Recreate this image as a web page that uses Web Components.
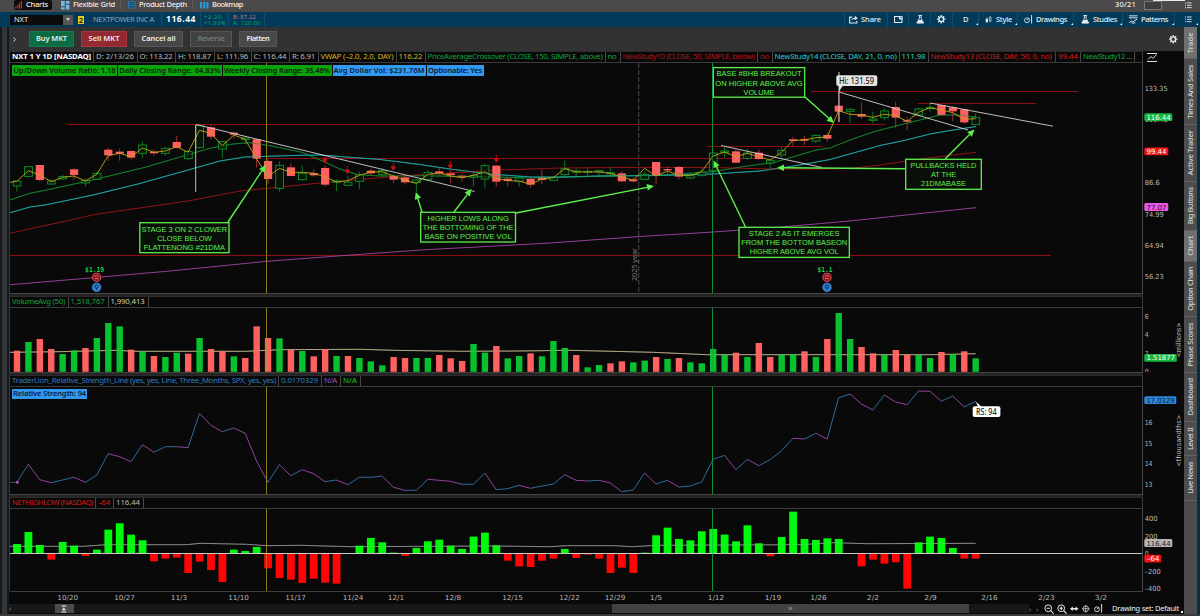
<!DOCTYPE html>
<html lang="en">
<head>
<meta charset="utf-8">
<title>NXT Charts</title>
<style>
    html, body { margin: 0; height: 100%; overflow: hidden; background: #0a0a0a; }
    body { font-family: "Noto Sans", "Open Sans", sans-serif; font-size: 7.5px; color: #ddd; }
</style>
</head>
<body>
<trading-desk></trading-desk>

<script>
// text stretched or squeezed to a given width through its letter spacing
class FitText extends HTMLElement {
    constructor() {
        super()
        this.attachShadow({ mode: 'open' })
        this.shadowRoot.innerHTML = `
            <style>
                :host { display: inline-block; white-space: nowrap; line-height: 1; }
            </style>
            <slot></slot>
        `
    }

    connectedCallback() {
        const width = Number(this.getAttribute('w'))
        const range = document.createRange()
        range.selectNodeContents(this)
        const natural = range.getBoundingClientRect().width
        const count = this.textContent.length
        if (width && natural) this.style.letterSpacing = ((width - natural) / count).toFixed(3) + 'px'
    }
}
customElements.define('fit-text', FitText)

const ICONS = {
    bars: '<path d="M0 6h1.3v2H0zM2 4.500h1.300V8H2zM4 2.500h1.300V8H4zM6 0h1.500v8H6z" fill="#d62b20"/>',
    grid: '<path d="M0 0h3.500v5H0zM4.500 0H8v2.500H4.500zM0 6h3.500v2H0zM4.500 3.500H8V8H4.500z" fill="#6fb7e4"/>',
    depth: '<path d="M.5.5h7v7h-7z" fill="#174c68" stroke="#2f7ba5"/><path d="M1 3h6M1 5h6" stroke="#3e8bb5" stroke-width=".7"/>',
    book: '<path d="M0 1h2v6H0zM3 1h2v6H3zM6 1h2v6H6z" fill="#1f9be0"/>',
    share: '<path d="M3 2H.6v5.500h6.800V5.500" fill="none" stroke="#e6edf2"/><path d="M2.300 5.500c.2-2 1.300-3 3.200-3V.8L8.300 3 5.500 5V3.800c-1.500 0-2.500.5-3.200 1.700z" fill="#e6edf2"/>',
    calendar: '<path d="M.5 1.500h5v1.500h2v4h-7z" fill="none" stroke="#e6edf2"/><circle cx="6.400" cy="2.700" r="1.900" fill="#e6edf2"/><path d="M6.400 1.500v1.400h1" stroke="#033a59" stroke-width=".6" fill="none"/>',
    flask: '<path d="M2.300.5h3.400M3.200.5v2.800L.8 7.500h6.400L4.800 3.300V.5" fill="none" stroke="#e6edf2" stroke-width=".9"/><path d="M2.500 4.700h3L7.200 7.700H.8z" fill="#e6edf2"/>',
    gear: '<circle cx="4" cy="4" r="2.200" fill="none" stroke="#e6edf2" stroke-width="1.300"/><path d="M4 0v1.500M4 6.500V8M0 4h1.500M6.500 4H8M1.200 1.200l1 1M5.800 5.800l1 1M6.800 1.200l-1 1M2.200 5.800l-1 1" stroke="#e6edf2" stroke-width="1.200"/>',
    candles: '<path d="M2 1.500v6M5.500 0v7" stroke="#e6edf2" stroke-width=".7"/><path d="M.8 3h2.400v3.500H.8z" fill="#e6edf2"/><path d="M4.500 1.500h2v3.500h-2z" fill="#033a59" stroke="#e6edf2" stroke-width=".7"/>',
    draw: '<circle cx="2.800" cy="5" r="2.300" fill="none" stroke="#e6edf2" stroke-width=".8"/><path d="M2.800 5l1.800-1.800M7.200 0v8" stroke="#e6edf2" stroke-width=".9"/>',
    pattern: '<path d="M0 .8h8M0 2.700h8M.5 7.500l1.500-2 1.500 1L7.500 4M2.500 7.500H6" fill="none" stroke="#e6edf2" stroke-width=".9"/>',
    list: '<path d="M0 1h1.200M2.200 1H7M0 3.500h1.200M2.200 3.500H7M0 6h1.200M2.200 6H7" stroke="#dfe6ea" stroke-width="1"/>',
    minus: '<circle cx="4" cy="4" r="3.200" fill="none" stroke="#eee" stroke-width=".9"/><path d="M6.300 6.300L9 9M2.400 4h3.200" stroke="#eee"/>',
    plus: '<circle cx="4" cy="4" r="3.200" fill="none" stroke="#eee" stroke-width=".9"/><path d="M6.300 6.300L9 9M2.400 4h3.200M4 2.400v3.200" stroke="#eee"/>',
    span: '<path d="M0 4l3-2.500v1.700h3V1.500L9 4 6 6.500V4.800H3v1.700z" fill="#eee"/>',
    target: '<circle cx="4" cy="4" r="3" fill="none" stroke="#ddd" stroke-width=".8"/><path d="M4 0v8M0 4h8" stroke="#ddd" stroke-width=".8"/>',
    dock: '<path d="M.5 1h5M.5 7.500h5" stroke="#eee" stroke-width="1.100"/><path d="M3 2.500L5 5.500H1z" fill="#eee"/>'
}

class UiIcon extends HTMLElement {
    constructor() {
        super()
        this.attachShadow({ mode: 'open' })
    }

    connectedCallback() {
        const size = this.getAttribute('size') || 9
        this.shadowRoot.innerHTML = `
            <style>
                :host { display: inline-block; line-height: 0; }
                svg { display: block; overflow: visible; }
            </style>
            <svg width="${size}" height="${size}" viewBox="0 0 8.5 8.5">${ICONS[this.getAttribute('name')]}</svg>
        `
    }
}
customElements.define('ui-icon', UiIcon)

class GadgetTabs extends HTMLElement {
    constructor() {
        super()
        this.attachShadow({ mode: 'open' })
        this.shadowRoot.innerHTML = `
            <style>
                :host { display: flex; height: 12px; background: #4b4949; color: #eee; font-weight: 500; overflow: hidden; }
                .tab { box-sizing: border-box; display: flex; align-items: center; height: 10px; border-right: 1px solid #5a5858; }
                .tab ui-icon { margin-right: 3px; }
                .active { background: #0d0d0d; border: 0; border-radius: 2px; margin: 0 3px 0 14px; width: 38px; padding-left: 1px; }
                .spacer { flex: 1; }
                .box { width: 16px; height: 7px; border: 1px solid #777; background: #3d3d3d; margin: 1px 0 0 8px; }
                .strip { width: 32px; height: 1px; background: #e8e8e8; margin: 0 -23px 0 -9px; }
                ui-icon { flex: none; }
            </style>
            <div class="tab active"><ui-icon name="bars" size="8"></ui-icon><fit-text w="22">Charts</fit-text></div>
            <div class="tab" style="width:66px;padding-left:6px"><ui-icon name="grid" size="9"></ui-icon><fit-text w="42">Flexible Grid</fit-text></div>
            <div class="tab" style="width:72px;padding-left:7px"><ui-icon name="depth" size="8"></ui-icon><fit-text w="48">Product Depth</fit-text></div>
            <div class="tab" style="width:58px;padding-left:7px;border:0"><ui-icon name="book" size="9"></ui-icon><fit-text w="31">Bookmap</fit-text></div>
            <div class="spacer"></div>
            <div class="tab" style="border:0"><fit-text w="21">30/21</fit-text></div>
            <div class="box"></div>
            <div class="strip"></div>
            <ui-icon name="list" size="8" style="margin:2px 7px 0 23px"></ui-icon>
        `
    }
}
customElements.define('gadget-tabs', GadgetTabs)

class SymbolBar extends HTMLElement {
    constructor() {
        super()
        this.attachShadow({ mode: 'open' })
        this.shadowRoot.innerHTML = `
            <style>
                :host { display: flex; align-items: center; height: 15px; background: #033a59; color: #e6edf2; }
                .input { display: flex; align-items: center; justify-content: space-between; width: 59px; height: 10px; margin-left: 10px; padding-left: 4px; background: #0c0c0c; }
                .drop { display: flex; align-items: center; justify-content: center; width: 10px; height: 10px; background: #555; }
                .drop::after { content: ''; border: 2px solid transparent; border-top: 3px solid #ccc; border-bottom: 0; }
                .link { width: 6px; height: 8px; margin-left: 5px; background: #e8cf1c; color: #222; font-weight: bold; line-height: 8px; text-align: center; }
                .rule { width: 1px; height: 13px; background: #134e70; }
                .stack { display: flex; flex-direction: column; font-size: 5.8px; }
                .stack fit-text { display: block; line-height: 6px; }
                .menu { box-sizing: border-box; display: flex; align-items: center; height: 13px; border-left: 1px solid #134e70; font-weight: 500; flex: none; }
                .menu ui-icon { margin-right: 3px; }
                .more::after { content: ''; margin-left: auto; margin-top: 8px; border: 1px solid transparent; border-right-color: #fff; border-bottom-color: #fff; }
                .spacer { flex: 1; }
            </style>
            <div class="input"><fit-text w="14">NXT</fit-text><div class="drop"></div></div>
            <div class="link">2</div>
            <fit-text w="61" style="margin-left:9px;color:#91a5b2">NEXTPOWER INC A</fit-text>
            <div class="rule" style="margin:0 4px 0 7px"></div>
            <fit-text w="30" style="font-size:8.5px;font-weight:700;color:#fff">116.44</fit-text>
            <div class="rule" style="margin:0 3px 0 4px"></div>
            <div class="stack" style="color:#13a45c;width:24px"><fit-text w="18">+2.20</fit-text><fit-text w="22">+1.93%</fit-text></div>
            <div class="rule" style="margin-right:4px"></div>
            <div class="stack" style="width:31px"><fit-text w="23" style="color:#bd7b8b">B: 87.22</fit-text><fit-text w="28" style="color:#13a45c">A: 120.00</fit-text></div>
            <div class="rule"></div>
            <div class="spacer"></div>
            <div class="menu" style="width:43px;padding-left:4px"><ui-icon name="share"></ui-icon><fit-text w="20">Share</fit-text></div>
            <div class="menu" style="width:21px;padding-left:6px"><ui-icon name="calendar"></ui-icon></div>
            <div class="menu" style="width:22px;padding-left:7px"><ui-icon name="flask"></ui-icon></div>
            <div class="menu" style="width:22px;padding-left:6px"><ui-icon name="gear"></ui-icon></div>
            <div class="menu more" style="width:26px;padding-left:10px"><fit-text w="5">D</fit-text></div>
            <div class="menu more" style="width:39px;padding-left:6px"><ui-icon name="candles" size="8"></ui-icon><fit-text w="16">Style</fit-text></div>
            <div class="menu more" style="width:56px;padding-left:6px"><ui-icon name="draw"></ui-icon><fit-text w="31">Drawings</fit-text></div>
            <div class="menu more" style="width:49px;padding-left:7px"><ui-icon name="flask"></ui-icon><fit-text w="24">Studies</fit-text></div>
            <div class="menu more" style="width:52px;padding-left:6px"><ui-icon name="pattern"></ui-icon><fit-text w="27">Patterns</fit-text></div>
            <div class="menu more" style="width:24px;padding-left:10px;margin-right:2px"><ui-icon name="list" size="8"></ui-icon></div>
        `
    }
}
customElements.define('symbol-bar', SymbolBar)

class OrderBar extends HTMLElement {
    constructor() {
        super()
        this.attachShadow({ mode: 'open' })
        this.shadowRoot.innerHTML = `
            <style>
                :host { box-sizing: border-box; display: flex; align-items: center; height: 24px; background: #323232; }
                .btn { box-sizing: border-box; display: flex; align-items: center; justify-content: center; height: 16px; border: 1px solid #565656; background: #484848; color: #eee; font-weight: 600; margin-right: 7px; }
                .buy { background: #0b6b43; border-color: #137a4f; width: 45px; }
                .sell { background: #942a31; border-color: #a8363d; width: 46px; }
                .off { background: #424242; color: #7a7a7a; }
                .spacer { flex: 1; }
            </style>
            <svg width="20" height="9" viewBox="0 0 20 9"><path d="M4.500 2.500l2 2-2 2" stroke="#ddd" fill="none"/></svg>
            <div class="btn buy"><fit-text w="31">Buy MKT</fit-text></div>
            <div class="btn sell"><fit-text w="31">Sell MKT</fit-text></div>
            <div class="btn" style="width:49px"><fit-text w="34">Cancel all</fit-text></div>
            <div class="btn off" style="width:42px"><fit-text w="27">Reverse</fit-text></div>
            <div class="btn" style="width:38px"><fit-text w="23">Flatten</fit-text></div>
            <div class="spacer"></div>
            <ui-icon name="gear" size="9" style="margin-right:6px"></ui-icon>
        `
    }
}
customElements.define('order-bar', OrderBar)

// cells come in as [text, cell width, text width, colour]
class StudyHeader extends HTMLElement {
    constructor() {
        super()
        this.attachShadow({ mode: 'open' })
    }

    set cells(cells) {
        this.shadowRoot.innerHTML = `
            <style>
                :host { box-sizing: border-box; display: flex; width: 1134px; height: 11px; flex: none; border: 1px solid #3b3b3b; border-top-color: #2b2b2b; background: #090909; font-size: 7.800px; }
                .cell { box-sizing: border-box; flex: none; display: flex; align-items: center; padding-left: 2px; border-right: 1px solid #484848; overflow: hidden; }
            </style>
            ${cells.map(([text, cell, w, color, bold]) => `
                <div class="cell" style="width:${cell}px;color:${color};${bold ? 'font-weight:700' : ''}"><fit-text w="${w}">${text}</fit-text></div>
            `).join('')}
        `
    }
}
customElements.define('study-header', StudyHeader)

class StudyLabel extends HTMLElement {
    constructor() {
        super()
        this.attachShadow({ mode: 'open' })
        this.shadowRoot.innerHTML = `
            <style>
                :host { box-sizing: border-box; display: flex; align-items: center; justify-content: center; height: 10.500px; flex: none; font-weight: 600; color: #062306; background: #0ba30b; }
                :host([blue]) { background: #3399f0; color: #06203c; }
            </style>
            <slot></slot>
        `
    }
}
customElements.define('study-label', StudyLabel)

/* ---- series data: y values are thirds of a pixel below the series base ---- */

const FIRST_X = 16.9
const STEP = 11.413
const xAt = i => +(FIRST_X + STEP * i).toFixed(2)

const VOLUME = 'R182 G156 R147 R177 G192 G181 R174 G144 G99 G109 R179 G184 R198 G201 G188 R191 G144 R177 R183 G199 R204 R109 R144 G145 R179 G183 R199 R177 G198 R198 G204 G214 G226 R201 R204 G204 G204 R195 R205 R213 G162 G188 R168 G205 G198 R190 G199 G153 G174 R195 G232 G225 R220 R214 G217 G212 R201 G207 R204 G217 G220 G177 G194 R188 G201 R159 R201 G194 G192 R184 G201 R147 G69 G147 R171 R190 G194 R180 R194 G195 G204 R186 G192 R184 G205'.split(' ')

const STRENGTH = [577, 523, 569, 578, 570, 562, 577, 555, 491, 500, 515, 464, 487, 470, 470, 473, 370, 406, 425, 414, 430, 513, 577, 524, 557, 539, 551, 575, 570, 584, 562, 562, 558, 592, 601, 601, 568, 571, 574, 583, 583, 549, 599, 596, 586, 595, 588, 582, 554, 571, 573, 571, 579, 605, 600, 549, 582, 571, 591, 588, 576, 508, 496, 539, 508, 527, 509, 482, 445, 447, 430, 447, 323, 312, 342, 360, 315, 336, 344, 303, 304, 334, 318, 351, 334]

const HIGHLOW = [162, 126, 165, 209, 156, 167, 198, 179, 119, 100, 134, 151, 214, 206, 203, 249, 215, 240, 276, 179, 183, 171, 235, 264, 269, 279, 266, 278, 281, 190, 167, 144, 157, 188, 198, 174, 154, 149, 167, 177, 140, 128, 166, 212, 229, 231, 212, 206, 177, 204, 194, 206, 249, 233, 249, 188, 136, 113, 147, 151, 124, 117, 134, 154, 106, 160, 199, 141, 65, 147, 150, 145, 147, 192, 229, 209, 221, 217, 296, 157, 140, 144, 174, 206, 206]

// colour, body top, body bottom, high, low
const CANDLES_A = `G 303 318 303 335|G 260 289 258 293|R 255 300 255 305|G 303 312 298 315|G 290 297 284 300|R 268 285 264 300|G 301 309 295 320|G 280 298 275 300|R 209 226 203 242|R 215 221 206 242|R 213 233 210 238|G 195 220 184 234|R 215 220 208 227|G 205 220 200 228|R 186 203 168 206|G 214 236 210 240|G 137 203 135 205|R 142 170 135 178|G 185 207 182 235|R 158 164 155 176|G 174 179 170 192|R 178 236 178 262|R 243 297 238 312|G 256 325 244 335|R 262 288 250 290|G 280 299 257 303|R 279 286 268 290|R 264 314 256 320|G 303 306 298 333|G 307 316 288 318|G 284 304 275 328|R 272 280 267 286|G 272 283 265 290|R 288 299 283 309|R 292 307 290 314|G 300 308 297 335|G 277 299 270 302|R 274 280 262 286|R 280 285 270 310|R 287 292 282 304|G 286 292 273 320|G 257 297 252 322|R 257 305 255 320|R 296 303 292 318|G 294 304 290 320|R 297 314 290 323|R 293 300 269 312|G 293 301 290 303|G 266 284 242 288|G 273 276 266 288|G 274 277 264 287|G 272 275 270 287|G 278 281 262 291|R 280 304 273 306|R 298 304 294 307|G 283 298 275 300|R 246 288 246 312`
const CANDLES_B = `R 327 331 320 348|R 321 350 317 358|G 345 354 340 358|G 336 347 325 349|G 279 332 275 338|G 273 277 262 292|R 274 308 268 310|G 279 295 266 300|R 278 297 268 300|G 301 309 296 325|G 271 285 262 293|R 238 243 230 260|R 237 242 228 254|G 226 243 222 250|R 225 236 220 246|R 137 155 95 186|G 148 154 145 190|R 162 170 127 176|G 177 181 155 190|G 153 173 145 181|R 141 173 126 203|R 181 185 170 210|G 147 165 142 167|G 142 146 130 155|R 135 165 133 167|R 142 154 138 184|R 148 187 146 192|G 172 194 160 196`
const VWAP_A = [304, 272, 285, 305, 292, 288, 303, 283, 227, 220, 230, 204, 217, 213, 200, 217, 151, 160, 197, 165, 178, 237, 290, 265, 277, 277, 280, 290, 306, 302, 286, 276, 275, 288, 301, 310, 283, 279, 288, 293, 286, 275, 295, 302, 303, 313, 297, 293, 266, 276, 275, 276, 280, 291, 301, 265, 288]
const VWAP_B = [333, 346, 347, 335, 288, 276, 290, 280, 290, 300, 277, 241, 240, 233, 231, 152, 163, 165, 172, 163, 167, 184, 157, 143, 150, 158, 178, 176]

const AVERAGES = [
    ['#12822f', '10,200 30,193.300 50,189.300 96.700,179 145,167.300 188,154.700 211,148 233,144 250,142.700 270,145.700 302,152.300 320,160 340,169 357,174.500 380,176 420,175.700 497,177 533,178 620,175.700 657,175.300 713,171.700 747,166 773,162.700 793,157 816,150 830,148 850,140 873,132 897,125.700 920,120 940,115 957,115 976,117'],
    ['#20a9a9', '10,212.700 30,207 45,205 93,195 138,184 188,170 220,161 245,157 300,155.300 320,155 380,159.500 420,164.500 450,169 490,174 530,177 560,177 600,176 660,175.500 713,174 760,171 800,165 830,159.500 855,152.500 880,145.500 905,140.300 930,134 950,130.500 976,126.500'],
    ['#a31414', '10,233.300 96,214.300 188,201 240,191 280,187 320,183 360,179.500 400,176 450,173 500,170 560,168 620,167.500 660,167.300 713,167.500 770,169 820,169 850,168.500 880,165 920,159 976,152.300'],
    ['#a545a8', '10,284.700 90,278 170,271 267,261.300 320,257.300 420,250 490,246.300 550,243 640,236.500 713,232 770,228 850,221 920,213.500 976,207.700']
]

const line = (x1, y1, x2, y2, color, width = 0.8, extra = '') =>
    `<path d="M${x1} ${y1}L${x2} ${y2}" stroke="${color}" stroke-width="${width}" fill="none" ${extra}/>`

const label = (text, x, y, w, extra = '') =>
    `<text x="${x}" y="${y}" textLength="${w}" lengthAdjust="spacingAndGlyphs" ${extra}>${text}</text>`

const poly = (points, color, width = 0.8) =>
    `<polyline points="${points}" fill="none" stroke="${color}" stroke-width="${width}"/>`

const thirds = (base, pairs) => pairs.map(([x, y]) => `${(x / 3).toFixed(1)},${(base + y / 3).toFixed(1)}`).join(' ')

function arrow(x1, y1, x2, y2) {
    const a = Math.atan2(y2 - y1, x2 - x1)
    const bx = x2 - 7 * Math.cos(a)
    const by = y2 - 7 * Math.sin(a)
    const dx = 3.3 * Math.sin(a)
    const dy = 3.3 * Math.cos(a)
    return line(x1, y1, bx, by, '#5cf04c', 1.4) +
        `<path d="M${x2} ${y2}L${bx + dx} ${by - dy}L${bx - dx} ${by + dy}z" fill="#5cf04c"/>`
}

function note(x, y, w, h, rows) {
    return `<rect x="${x}" y="${y}" width="${w}" height="${h}" fill="#0a0f0a" stroke="#5cf04c" stroke-width="1.3"/>` +
        rows.map(([text, tw], i) => label(text, x + w / 2, y + 8.8 + i * 9.1, tw, 'text-anchor="middle" class="note"')).join('')
}

function tag(text, y, w, bg, fg) {
    return `<rect x="1144.300" y="${y - 3.9}" width="${w}" height="7.800" rx="1.500" fill="${bg}"/>` +
        label(text, 1146.5, y + 2.6, w - 4, `class="tag" fill="${fg}"`)
}

const tick = (text, y, w = text.length * 3.9) => label(text, 1144.7, y + 2.6, w, 'class="tick"')

function candles() {
    const rows = CANDLES_A.split('|').map(r => [80, r]).concat(CANDLES_B.split('|').map(r => [60, r]))
    return rows.map(([base, row], i) => {
        const [kind, ...v] = row.split(' ')
        const [top, bottom, high, low] = v.map(n => base + n / 3)
        const x = xAt(i)
        const h = Math.max(bottom - top, 1.2)
        if (kind === 'R') {
            return line(x, high, x, low, '#c73434') + `<rect x="${x - 4}" y="${top}" width="8.200" height="${h}" fill="#ff6161"/>`
        }
        return line(x, high, x, top, '#0f9429') + line(x, bottom, x, low, '#0f9429') +
            `<rect x="${x - 3.7}" y="${top}" width="7.800" height="${h}" fill="#091509" stroke="#0f9429" stroke-width=".9"/>`
    }).join('')
}

function earnings(x, amount, w) {
    return label(amount, x - 2, 271.5, w, 'text-anchor="middle" fill="#15cf45" style="font:bold 7px DejaVu Sans Mono,monospace"') +
        `<circle cx="${x}" cy="277.300" r="4.100" fill="#7c1c20" stroke="#e84a4e"/><path d="M${x - 2} 276.500q2 -2 4 0M${x - 2} 278.600h4" stroke="#ff7478" fill="none" stroke-width=".8"/>` +
        `<circle cx="${x}" cy="287.300" r="4.300" fill="#2e7fd0" stroke="#3b93ea" stroke-width=".7"/><circle cx="${x}" cy="286.400" r="1.700" fill="none" stroke="#08294f" stroke-width=".9"/><path d="M${x} 288v2" stroke="#08294f"/>`
}

const PLOTS = {
    price() {
        const vwap = [...VWAP_A.map(v => 80 + v / 3), ...VWAP_B.map(v => 60 + v / 3)]
        const reds = [[68, 124.5, 885], [10, 255.5, 1051], [267, 158.5, 760], [707, 146.5, 823], [811, 91.5, 1078], [918, 103.5, 1036]]
        const marks = [[325, 159.5], [347.3, 170], [393.3, 166.7], [450.3, 165], [496.3, 158.7]]
        return `
            ${reds.map(([x, y, end]) => line(x, y, end, y, '#8e0e10', 1)).join('')}
            ${line(638.8, 63, 638.8, 293, '#484848', 1, 'stroke-dasharray="5 2"')}
            <text transform="translate(637 281) rotate(-90)" textLength="33" lengthAdjust="spacingAndGlyphs" fill="#777">2025 year</text>
            ${AVERAGES.map(([color, pts]) => poly(pts, color, 0.9)).join('')}
            ${candles()}
            ${AVERAGES.slice(0, 2).map(([color, pts]) => `<g opacity=".6">${poly(pts, color, 0.8)}</g>`).join('')}
            ${poly('10,182.300 ' + vwap.map((y, i) => `${xAt(i)},${y.toFixed(1)}`).join(' '), '#c3a514', 0.9)}
            ${marks.map(([x, y]) => `<path d="M${x} ${y - 4}v5M${x - 2} ${y}h4l-2 3.500z" stroke="#d60c0c" stroke-width=".9" fill="#d60c0c"/>`).join('')}
            ${line(195.7, 125, 195.7, 192, '#cfcfcf', 0.9)}
            ${line(196, 124.5, 474.5, 191.5, '#d2d2d2', 0.9)}
            ${line(721, 145.5, 822, 167.5, '#d2d2d2', 0.9)}
            ${line(839, 92, 968, 130, '#d2d2d2', 0.9)}
            ${line(930, 103, 1053, 126.2, '#d2d2d2', 0.9)}
            ${line(839, 72, 839, 122, '#cfcfcf', 1)}
            ${arrow(228, 222, 265.7, 165)}
            ${arrow(422, 212, 415.8, 192)}${arrow(454, 212, 471.5, 189)}${arrow(516, 213, 654, 186)}
            ${arrow(805, 97, 834, 123)}
            ${arrow(745.5, 227, 713.5, 160.5)}
            ${arrow(945, 159, 974.5, 129.5)}${arrow(905, 168.7, 777, 167.7)}
            ${note(139.8, 222.7, 89.2, 30, [['STAGE 3 ON 2 CLOWER', 85.7], ['CLOSE BELOW', 54.5], ['FLATTENONG #21DMA', 81.3]])}
            ${note(420.7, 212.3, 94.8, 29.7, [['HIGHER LOWS ALONG', 81.3], ['THE BOTTOMING OF THE', 90.7], ['BASE ON POSITIVE VOL', 87]])}
            ${note(713.3, 67.6, 91.4, 29.6, [['BASE #BHB BREAKOUT', 85], ['ON HIGHER ABOVE AVG', 87.3], ['VOLUME', 31]])}
            ${note(739, 227.3, 110.3, 30.1, [['STAGE 2 AS IT EMERGES', 90.7], ['FROM THE BOTTOM BASEON', 106], ['HIGHER ABOVE AVG VOL', 89]])}
            ${note(905.7, 159.3, 75.6, 30, [['PULLBACKS HELD', 66], ['AT THE', 25], ['21DMABASE', 45]])}
            <path d="M839 85.500l0 6 4-6z" fill="#e4e4e4"/><rect x="836.300" y="75.300" width="41" height="10.700" rx="2" fill="#e4e4e4"/>
            ${label('Hi: 131.59', 839, 83.5, 35, 'fill="#222" style="font-size:8px;font-weight:500"')}
            ${earnings(96.6, '$1.19', 19)}${earnings(827, '$1.1', 15)}
            ${tick('133.35', 88.2, 23)}${tick('86.6', 182.6, 15)}${tick('115.48', 119.5, 23)}
            ${tick('64.94', 245, 19)}${tick('56.23', 276.5, 19)}
            ${tag('116.44', 117.1, 28, '#16b83c', '#fff')}${tag('99.44', 151.3, 24, '#f01616', '#fff')}
            ${tag('77.07', 207, 24, '#e65ae6', '#3a093a')}${tick('74.99', 214, 19)}`
    },

    volume() {
        const avg = thirds(290, [[30, 187], [180, 185], [350, 181], [400, 184], [740, 184], [840, 179], [1080, 178], [1180, 181], [1385, 184], [1560, 183], [1710, 181], [1960, 187], [2120, 194], [2800, 194], [2927, 191]])
        return `
            ${poly(avg, '#a99f7c', 1)}
            ${VOLUME.map((v, i) => {
                const y = 290 + v.slice(1) / 3
                return `<rect x="${xAt(i) - 3.1}" y="${y}" width="6.400" height="${371.8 - y}" fill="${v[0] === 'R' ? '#ff6161' : '#07c22e'}"/>`
            }).join('')}
            <g opacity=".45">${poly(avg, '#b8b080', 0.8)}</g>
            ${tick('6', 316)}${tick('4', 334.5)}${tick('2', 353)}${tick('0', 371.5)}
            <text transform="translate(1181.300 357.500) rotate(-90)" textLength="35" lengthAdjust="spacingAndGlyphs" class="tick">&lt;millions&gt;</text>
            ${tag('1.51877', 357.8, 32.5, '#16b83c', '#fff')}`
    },

    strength() {
        const pts = STRENGTH.map((v, i) => [xAt(i), +(290 + v / 3).toFixed(1)])
        return `
            ${line(10, 482.3, xAt(0), 482.3, '#2e6a9c')}
            ${pts.slice(1).map(([x, y], i) => line(pts[i][0], pts[i][1], x, y, y > pts[i][1] ? '#93429a' : '#2e6a9c', 1)).join('')}
            <circle cx="17.300" cy="482.300" r="1.400" fill="#b75fc2"/>
            <path d="M975.500 401.500l7 6h-4z" fill="#fff"/><rect x="972.700" y="406.300" width="27.700" height="10.800" rx="2" fill="#fff"/>
            ${label('RS: 94', 976, 414.6, 20.5, 'fill="#222" style="font-size:8px;font-weight:500"')}
            ${tag('17.0329', 400.2, 32, '#2f86dd', '#041c3a')}
            ${tick('16', 422.5)}${tick('15', 443)}${tick('14', 463.7)}${tick('13', 484.2)}
            <text transform="translate(1181.300 466.700) rotate(-90)" textLength="52" lengthAdjust="spacingAndGlyphs" class="tick">&lt;thousandths&gt;</text>`
    },

    highlow() {
        const px = thirds(490, [[30, 169], [250, 169], [320, 164], [560, 164], [600, 160], [740, 163], [800, 167], [900, 166], [1050, 170], [1480, 168], [1650, 170], [1700, 167], [1840, 167], [1900, 170], [1970, 166], [2400, 164], [2500, 158], [2600, 161], [2927, 160]])
        return `
            ${poly(px, '#858585', 0.9)}
            ${HIGHLOW.map((v, i) => {
                const h = Math.abs(v - 190) / 3
                return `<rect x="${xAt(i) - 3.8}" y="${v < 190 ? 553.3 - h : 553.3}" width="7.800" height="${h}" fill="${v < 190 ? '#00fa0c' : '#ff0505'}"/>`
            }).join('')}
            <g opacity=".35">${poly(px, '#aaa', 0.8)}</g>
            ${line(10, 553.5, 1143, 553.5, '#c9c9c9', 1)}
            ${tick('400', 518.5, 13)}${tick('200', 536, 13)}${tick('0', 553)}${tick('–200', 571.2, 16)}${tick('–400', 588, 16)}
            ${tag('116.44', 543, 28, '#b5b5b5', '#222')}${tag('–64', 558.6, 17, '#ee1212', '#fff')}`
    }
}

class PlotArea extends HTMLElement {
    constructor() {
        super()
        this.attachShadow({ mode: 'open' })
    }

    connectedCallback() {
        const top = Number(this.getAttribute('top'))
        const height = Number(this.getAttribute('height'))
        this.shadowRoot.innerHTML = `
            <style>
                :host { display: grid; flex: none; width: 1175px; height: ${height}px; }
                svg, .labels { grid-area: 1 / 1; display: block; }
                .labels { display: flex; gap: 1px; padding: 2px 0 0 3px; align-items: flex-start; }
                text { font-family: "Noto Sans", "Open Sans", sans-serif; font-size: 7.500px; }
                .note { font-family: "Liberation Sans", Arial, sans-serif; font-size: 8px; fill: #5cf04c; }
                .tick, .tag { font-family: "DejaVu Sans", sans-serif; font-size: 7px; }
                .tick { fill: #b9b9b9; }
            </style>
            <svg width="1175" height="${height}" viewBox="9 ${top} 1175 ${height}">
                ${line(266.5, top, 266.5, top + height, '#756915', 1)}
                ${line(712.5, top, 712.5, top + height, '#0c7a34', 1)}
                ${PLOTS[this.getAttribute('plot')]()}
                ${line(266.5, top, 266.5, top + height, '#a89417', 0.5)}
                ${line(712.5, top, 712.5, top + height, '#12a048', 0.5)}
                ${line(9.5, top, 9.5, top + height, '#303c42', 1)}
                ${line(1142.5, top, 1142.5, top + height, '#4a4a4a', 1)}
            </svg>
            <div class="labels"><slot></slot></div>
        `
    }
}
customElements.define('plot-area', PlotArea)

class DateAxis extends HTMLElement {
    constructor() {
        super()
        this.attachShadow({ mode: 'open' })
        const dates = [['10/20', 67.7], ['10/27', 124.5], ['11/3', 179], ['11/10', 238.5], ['11/17', 295.5], ['11/24', 353], ['12/1', 396], ['12/8', 453], ['12/15', 512.5], ['12/22', 569.5], ['12/29', 615], ['1/5', 656], ['1/12', 716], ['1/19', 773], ['1/26', 818.5], ['2/2', 873], ['2/9', 930.5], ['2/16', 989.5], ['2/23', 1046.5], ['3/2', 1101]]
        this.shadowRoot.innerHTML = `
            <style>
                :host { display: block; height: 12px; flex: none; }
                svg { display: block; }
                text { font-family: "DejaVu Sans", sans-serif; font-size: 7px; fill: #b5b5b5; text-anchor: middle; }
            </style>
            <svg width="1175" height="12" viewBox="9 591 1175 12">
                ${line(10, 591.5, 1143, 591.5, '#3d3d3d', 1)}
                ${dates.map(([text, x]) => label(text, x, 599.8, text.length * 4.15)).join('')}
            </svg>
        `
    }
}
customElements.define('date-axis', DateAxis)

class ChartFooter extends HTMLElement {
    constructor() {
        super()
        this.attachShadow({ mode: 'open' })
        this.shadowRoot.innerHTML = `
            <style>
                :host { display: flex; align-items: center; height: 11px; flex: none; color: #eee; }
                .track { display: flex; width: 1020px; height: 9px; background: #171717; color: #999; line-height: 8px; }
                .home { display: flex; align-items: center; justify-content: center; width: 19px; margin-left: 43px; background: #4b4b4b; }
                .thumb { width: 357px; margin-left: 538px; background: #424242; text-align: center; }
                .tools { display: flex; align-items: center; gap: 4px; }
                .corner { width: 2px; height: 2px; background: #fff; margin: 6px 0 0 2px; }
            </style>
            <div class="track"><span style="width:3px">‹</span><div class="home"><ui-icon name="dock" size="8"></ui-icon></div><div class="thumb">≡</div></div>
            <span style="width:7px;color:#888">‹</span><span style="width:8px;color:#888">›</span>
            <div class="tools">
                <ui-icon name="minus" size="9"></ui-icon><ui-icon name="plus" size="9"></ui-icon><ui-icon name="span" size="8"></ui-icon><ui-icon name="target" size="8"></ui-icon><ui-icon name="draw" size="9"></ui-icon>
            </div>
            <fit-text w="67" style="margin-left:9px">Drawing set: Default</fit-text>
            <i class="corner"></i>
        `
    }
}
customElements.define('chart-footer', ChartFooter)

class SideTabs extends HTMLElement {
    constructor() {
        super()
        this.attachShadow({ mode: 'open' })
        const tabs = [['Trade', 32, 21, 1], ['Times And Sales', 66, 54], ['Active Trader', 57, 45], ['Big Buttons', 49, 37], ['Chart', 31, 20, 1], ['Option Chain', 55, 44], ['Phase Scores', 56, 44], ['Dashboard', 49, 37], ['Level II', 34, 23], ['Live News', 45, 32]]
        this.shadowRoot.innerHTML = `
            <style>
                :host { display: flex; flex-direction: column; width: 13px; background: #4d4d4d; border-right: 3px solid #06303c; color: #d5d5d5; font-weight: 500; }
                .tab { box-sizing: border-box; flex: none; display: flex; align-items: center; justify-content: center; width: 13px; border-bottom: 1px solid #626262; }
                .on { background: #707070; }
                span { display: flex; align-items: center; justify-content: center; width: 60px; flex: none; transform: rotate(-90deg); }
            </style>
            ${tabs.map(([text, h, w, on]) => `<div class="tab ${on ? 'on' : ''}" style="height:${h}px"><span><fit-text w="${w}">${text}</fit-text></span></div>`).join('')}
        `
        // the fit is taken on the turned box, so it is redone here from the unturned width
        requestAnimationFrame(() => {
            this.shadowRoot.querySelectorAll('fit-text').forEach((el, i) => {
                el.style.letterSpacing = '0'
                el.style.letterSpacing = ((tabs[i][2] - el.offsetWidth) / tabs[i][0].length).toFixed(3) + 'px'
            })
        })
    }
}
customElements.define('side-tabs', SideTabs)

class TradingDesk extends HTMLElement {
    constructor() {
        super()
        this.attachShadow({ mode: 'open' })
        this.shadowRoot.innerHTML = `
            <style>
                :host { display: grid; grid-template-rows: 12px 15px 587px 2px; width: 1200px; height: 616px; overflow: hidden; }
                .body { display: grid; grid-template-columns: 9px 1175px 16px; }
                .gutter { border-left: 2px solid #191919; background: #333638; border-right: 2px solid #111a1e; }
                .work { display: flex; flex-direction: column; min-width: 0; background: #090909; }
                order-bar { flex: none; }
                .split { flex: none; width: 1134px; box-sizing: border-box; background: #252525; border-top: 1px solid #444; }
                .head { display: flex; align-items: center; }
                .foot { background: #3a3a3a; }
            </style>
            <gadget-tabs></gadget-tabs>
            <symbol-bar></symbol-bar>
            <div class="body">
                <div class="gutter"></div>
                <div class="work">
                    <order-bar></order-bar>
                    <div class="head" style="height:12px">
                        <study-header id="price" style="height:12px"></study-header>
                        <svg width="14" height="11" viewBox="0 0 14 11" style="margin-left:3px"><path d="M1 1.500h10M1 9.500h10M2 7.500l3-3 2 2 3.500-4" stroke="#ddd" fill="none"/></svg>
                    </div>
                    <plot-area plot="price" top="63" height="230">
                        <study-label style="width:105px"><fit-text w="102">Up/Down Volume Ratio: 1.18</fit-text></study-label>
                        <study-label style="width:103.500px"><fit-text w="101">Daily Closing Range: 64.83%</fit-text></study-label>
                        <study-label style="width:109px"><fit-text w="106">Weekly Closing Range: 35.46%</fit-text></study-label>
                        <study-label blue style="width:93px"><fit-text w="91">Avg Dollar Vol: $231.76M</fit-text></study-label>
                        <study-label blue style="width:57px"><fit-text w="54">Optionable: Yes</fit-text></study-label>
                    </plot-area>
                    <div class="split" style="height:3px"></div>
                    <study-header id="volume" style="height:12px"></study-header>
                    <plot-area plot="volume" top="308" height="64"></plot-area>
                    <div class="split" style="height:3px"></div>
                    <study-header id="strength" style="height:12px"></study-header>
                    <plot-area plot="strength" top="387" height="107">
                        <study-label blue style="width:75px;margin-top:-.500px"><fit-text w="73">Relative Strength: 94</fit-text></study-label>
                    </plot-area>
                    <div class="split" style="height:3px"></div>
                    <study-header id="highlow" style="height:12px"></study-header>
                    <plot-area plot="highlow" top="509" height="82"></plot-area>
                    <date-axis></date-axis>
                    <chart-footer></chart-footer>
                </div>
                <side-tabs></side-tabs>
            </div>
            <div class="foot"></div>
        `
        const cells = {
            price: [
                ['NXT 1 Y 1D [NASDAQ]', 84, 79, '#fff', 1], ['D: 2/13/26', 43.5, 38, '#bbb'], ['O: 113.22', 38.5, 33, '#bbb'],
                ['H: 118.87', 39, 33, '#bbb'], ['L: 111.96', 36.5, 31, '#bbb'], ['C: 116.44', 38.5, 33, '#bbb'],
                ['R: 6.91', 28.5, 23, '#bbb'], ['VWAP (–2.0, 2.0, DAY)', 78, 73, '#d9b51f'], ['116.22', 29, 24, '#d9b51f'],
                ['PriceAverageCrossover (CLOSE, 150, SIMPLE, above)', 180, 175, '#0da53a'], ['no', 15, 9, '#0da53a'],
                ['NewStudy10 (CLOSE, 50, SIMPLE, below)', 137.5, 132, '#b31418'], ['no', 14.5, 9, '#b31418'],
                ['NewStudy14 (CLOSE, DAY, 21, 0, no)', 127, 122, '#2fd0c8'], ['111.98', 29, 24, '#2fd0c8'],
                ['NewStudy13 (CLOSE, DAY, 50, 0, no)', 127.5, 121, '#d61818'], ['99.44', 25, 20, '#d61818'],
                ['NewStudy12 ...', 54, 49, '#0da53a']
            ],
            volume: [['VolumeAvg (50)', 58.5, 53, '#0da53a'], ['1,518,767', 40, 34, '#0da53a'], ['1,990,413', 40.5, 34, '#d8cda4']],
            strength: [['TraderLion_Relative_Strength_Line (yes, yes, Line, Three_Months, SPX, yes, yes)', 269, 264, '#2f7fc0'], ['0.0170329', 43, 37, '#2f7fc0'], ['N/A', 19, 13, '#a44ab5'], ['N/A', 20, 14, '#12cf12']],
            highlow: [['NETHIGHLOW (NASDAQ)', 86, 81, '#dd1212'], ['–64', 18, 12, '#dd1212'], ['116.44', 30, 24, '#b9b9b9']]
        }
        for (const id in cells) this.shadowRoot.getElementById(id).cells = cells[id]
    }
}
customElements.define('trading-desk', TradingDesk)
</script>
</body>
</html>
